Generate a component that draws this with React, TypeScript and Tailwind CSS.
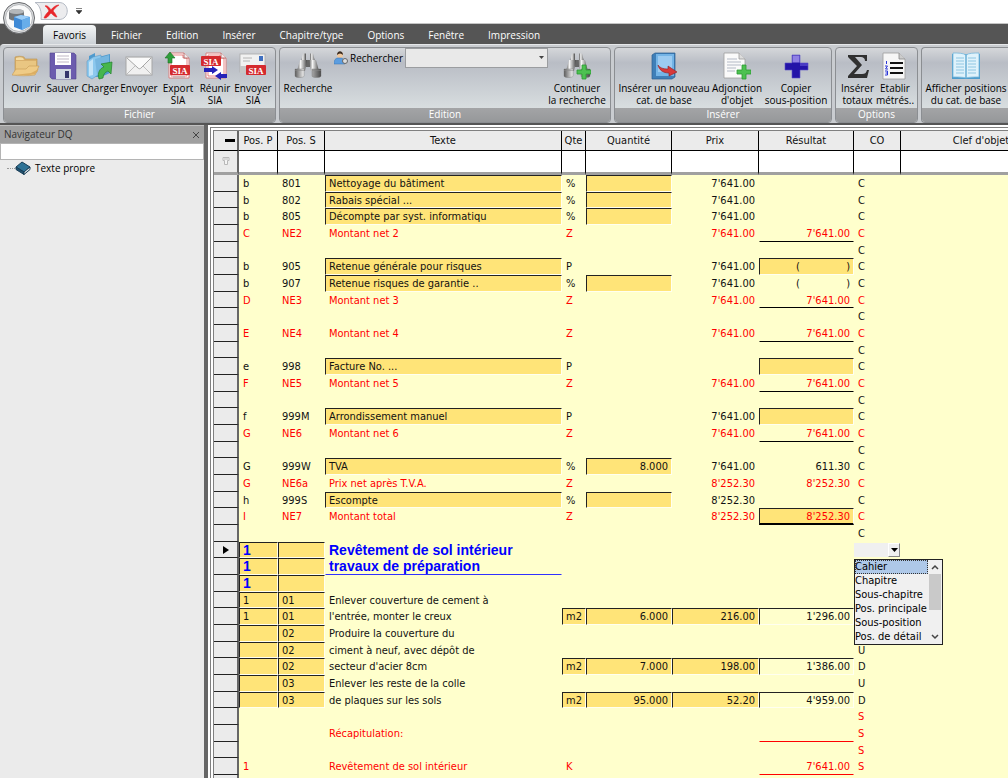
import { ReactNode } from "react";
import clsx from "clsx";

type Row = {
  p?: string;
  s?: string;
  text?: string;
  unit?: string;
  qty?: string;
  price?: string;
  result?: string;
  co?: string;
  red?: boolean;
  title?: boolean;
  titleEnd?: boolean;
  current?: boolean;
  // keys of the cells drawn as sunken edit fields
  boxes?: string;
  line?: "black" | "red" | "double";
};

const rows: Row[] = [
  { p: "b", s: "801", text: "Nettoyage du bâtiment", unit: "%", price: "7'641.00", co: "C", boxes: "text qty" },
  { p: "b", s: "802", text: "Rabais spécial ...", unit: "%", price: "7'641.00", co: "C", boxes: "text qty" },
  { p: "b", s: "805", text: "Décompte par syst. informatiqu", unit: "%", price: "7'641.00", co: "C", boxes: "text qty" },
  { p: "C", s: "NE2", text: "Montant net 2", unit: "Z", price: "7'641.00", result: "7'641.00", co: "C", red: true, line: "black" },
  { co: "C" },
  { p: "b", s: "905", text: "Retenue générale pour risques", unit: "P", price: "7'641.00", result: "()", co: "C", boxes: "text result" },
  { p: "b", s: "907", text: "Retenue risques de garantie ..", unit: "%", price: "7'641.00", result: "()", co: "C", boxes: "text qty" },
  { p: "D", s: "NE3", text: "Montant net 3", unit: "Z", price: "7'641.00", result: "7'641.00", co: "C", red: true, line: "black" },
  { co: "C" },
  { p: "E", s: "NE4", text: "Montant net 4", unit: "Z", price: "7'641.00", result: "7'641.00", co: "C", red: true, line: "black" },
  { co: "C" },
  { p: "e", s: "998", text: "Facture No. ...", unit: "P", co: "C", boxes: "text result" },
  { p: "F", s: "NE5", text: "Montant net 5", unit: "Z", price: "7'641.00", result: "7'641.00", co: "C", red: true, line: "black" },
  { co: "C" },
  { p: "f", s: "999M", text: "Arrondissement manuel", unit: "P", price: "7'641.00", co: "C", boxes: "text result" },
  { p: "G", s: "NE6", text: "Montant net 6", unit: "Z", price: "7'641.00", result: "7'641.00", co: "C", red: true, line: "black" },
  { co: "C" },
  { p: "G", s: "999W", text: "TVA", unit: "%", qty: "8.000", price: "7'641.00", result: "611.30", co: "C", boxes: "text qty" },
  { p: "G", s: "NE6a", text: "Prix net après T.V.A.", unit: "Z", price: "8'252.30", result: "8'252.30", co: "C", red: true },
  { p: "h", s: "999S", text: "Escompte", unit: "%", price: "8'252.30", co: "C", boxes: "text qty" },
  { p: "I", s: "NE7", text: "Montant total", unit: "Z", price: "8'252.30", result: "8'252.30", co: "C", red: true, boxes: "result", line: "double" },
  { co: "C" },
  { p: "1", text: "Revêtement de sol intérieur", title: true, current: true, boxes: "pos" },
  { p: "1", text: "travaux de préparation", title: true, titleEnd: true, boxes: "pos" },
  { p: "1", title: true, boxes: "pos" },
  { p: "1", s: "01", text: "Enlever couverture de cement à", boxes: "pos" },
  { p: "1", s: "01", text: "l'entrée, monter le creux", unit: "m2", qty: "6.000", price: "216.00", result: "1'296.00", boxes: "pos unit qty price sum" },
  { s: "02", text: "Produire la couverture du", boxes: "pos" },
  { s: "02", text: "ciment à neuf, avec dépôt de", co: "U", boxes: "pos" },
  { s: "02", text: "secteur d'acier 8cm", unit: "m2", qty: "7.000", price: "198.00", result: "1'386.00", co: "D", boxes: "pos unit qty price sum" },
  { s: "03", text: "Enlever les reste de la colle", co: "U", boxes: "pos" },
  { s: "03", text: "de plaques sur les sols", unit: "m2", qty: "95.000", price: "52.20", result: "4'959.00", co: "D", boxes: "pos unit qty price sum" },
  { co: "S", red: true },
  { text: "Récapitulation:", co: "S", red: true, line: "red" },
  { co: "S", red: true },
  { p: "1", text: "Revêtement de sol intérieur", unit: "K", result: "7'641.00", co: "S", red: true, line: "red" },
  {},
];

const menu = ["Fichier", "Edition", "Insérer", "Chapitre/type", "Options", "Fenêtre", "Impression"];
const levels = ["Cahier", "Chapitre", "Sous-chapitre", "Pos. principale", "Sous-position", "Pos. de détail"];

/* ---------- icons ---------- */

const Icon = ({ children }: { children: ReactNode }) => (
  <svg viewBox="0 0 28 28" className="w-7 h-7 shrink-0" aria-hidden="true">
    {children}
  </svg>
);

const SiaTag = ({ x, y }: { x: number; y: number }) => (
  <g transform={`translate(${x} ${y})`}>
    <rect width="20" height="10" rx="1" fill="#d42a2e" />
    <text x="10" y="8.6" textAnchor="middle" fontSize="9" fontWeight="bold" fill="#fff" fontFamily="Liberation Serif, serif">
      SIA
    </text>
  </g>
);

const FolderIcon = () => (
  <Icon>
    <path d="M3 5c3-1 6-1 9 0l1 2h12v13H3z" fill="#d9b06c" stroke="#bd954f" strokeWidth=".6" />
    <path d="M4 6c3-1 5-1 7 0l1 2H4z" fill="#f3dba4" />
    <path d="M4 9h20v8H4z" fill="#e9c682" />
    <path d="M0 23l4-6h10l3-3h10l-4 9c-7 1-16 1-23 0z" fill="#efcb86" stroke="#c69b55" strokeWidth=".6" />
    <path d="M2 23c8 0 15 .5 21-1l4-5-8 4z" fill="#dcae62" />
  </Icon>
);

const SaveIcon = () => (
  <Icon>
    <path d="M1 1h24l2 2v24H3l-2-2z" fill="#6b5cae" stroke="#51448f" strokeWidth=".6" />
    <rect x="6" y="1" width="16" height="12" fill="#fff" />
    <path d="M8 4h12M8 7h12M8 10h12" stroke="#c0b7c6" strokeWidth="1.200" />
    <rect x="7" y="17" width="15" height="10" fill="#d3d9e2" />
    <rect x="16" y="19" width="4" height="7" fill="#35356b" />
  </Icon>
);

const LoadIcon = () => (
  <Icon>
    <path d="M3 4l6-3v5l15-4v19l-9 4H3z" fill="#4f9ace" />
    <path d="M1 9l6-4 8-2v18l-9 6-5-3z" fill="#8cc8ee" stroke="#5591bd" strokeWidth=".5" />
    <path d="M9 7l14-4v16l-12 4z" fill="#76b6e0" />
    <path d="M3 10l4-3v16l-4 1z" fill="#c4e4f7" />
    <path d="M13 27c-2-6 1-11 5-12l-3-3 11-2-1 12-3-3c-3 1-5 4-5 7z" fill="#46b64c" stroke="#24812d" strokeWidth=".7" />
  </Icon>
);

const MailIcon = () => (
  <Icon>
    <rect x="1" y="5" width="26" height="18" fill="#f0f0f0" stroke="#a6a6a6" />
    <path d="M2 22l9-9M26 22l-9-9" stroke="#bdbdbd" />
    <path d="M2 6l11 10c1 1 2 1 3 0L26 6" fill="#fafafa" stroke="#a6a6a6" />
  </Icon>
);

const SheetShape = () => (
  <>
    <path d="M5 1h15l5 5v20H5z" fill="#fff" stroke="#d98080" />
    <path d="M7 3h12v3h4v18H7z" fill="none" stroke="#e05050" strokeWidth=".7" />
    <path d="M20 1v5h5" fill="#eee" stroke="#a55" strokeWidth=".8" />
  </>
);

const ExportSiaIcon = () => (
  <Icon>
    <SheetShape />
    <path d="M9 25h12" stroke="#aaa" />
    <path d="M6 0l5 6H8v5H4V6H1z" fill="#2f9e3b" stroke="#1b7426" strokeWidth=".6" />
    <SiaTag x={6} y={13} />
  </Icon>
);

const MergeSiaIcon = () => (
  <Icon>
    <SheetShape />
    <SiaTag x={0} y={4} />
    <path d="M3 16h8v-2l6 4-6 4v-2H3zM26 22h-6v-2l-6 4 6 4v-2h6z" fill="#2522b8" />
  </Icon>
);

const SendSiaIcon = () => (
  <Icon>
    <rect x="1" y="2" width="25" height="18" fill="#f1f1f1" stroke="#aaa" strokeWidth=".8" />
    <rect x="20" y="4" width="4" height="5" fill="#3f6fc0" />
    <path d="M4 6h9M4 9h7" stroke="#b4b4b4" />
    <path d="M1 14h11v7H1z" fill="#c6c6c6" />
    <SiaTag x={7} y={13} />
  </Icon>
);

const BinoShape = () => (
  <>
    <defs>
      <linearGradient id="tube">
        <stop offset="0" stopColor="#5c5c5c" />
        <stop offset=".35" stopColor="#f4f4f4" />
        <stop offset=".7" stopColor="#9c9c9c" />
        <stop offset="1" stopColor="#484848" />
      </linearGradient>
    </defs>
    <path d="M9 1.500h3v8H7z" fill="url(#tube)" />
    <path d="M16 1.500h3l2 8h-5z" fill="url(#tube)" />
    <rect x="12" y="8" width="4" height="7" fill="#666" />
    <path d="M6 8h7l-2 11H3z" fill="url(#tube)" />
    <path d="M15 8h7l3 11h-8z" fill="url(#tube)" />
    <path d="M1 17h9v7c0 2-9 2-9 0zM18 17h9v7c0 2-9 2-9 0z" fill="url(#tube)" stroke="#777" strokeWidth=".4" />
    <path d="M1 18.500h9M18 18.500h9" stroke="#888" strokeWidth=".5" />
  </>
);

const GreenPlus = () => (
  <path d="M19 13h4v5h5v4h-5v5h-4v-5h-5v-4h5z" fill="#4dc151" stroke="#2c9a32" strokeWidth=".8" />
);

const BinocularsIcon = () => (
  <Icon>
    <BinoShape />
  </Icon>
);

const BinocularsPlusIcon = () => (
  <Icon>
    <BinoShape />
    <GreenPlus />
  </Icon>
);

const CatalogIcon = () => (
  <Icon>
    <path d="M2 3l3-2h20v24l-3 2H2z" fill="#3f7fb8" stroke="#2d5f91" strokeWidth=".7" />
    <path d="M6 2h18v22H6z" fill="#74b4e6" />
    <path d="M8 4h14v16H8z" fill="#9ccbf1" />
    <path d="M8 13c2 3 5 4 10 4v-3l9 6-8 4v-3c-6 0-10-3-11-8z" fill="#d8393a" stroke="#8f1f22" strokeWidth=".6" />
  </Icon>
);

const AddObjectIcon = () => (
  <Icon>
    <path d="M1 1h15l6 6v19H1z" fill="#fafafa" stroke="#a0a0a0" strokeWidth=".8" />
    <path d="M16 1v6h6" fill="#ddd" stroke="#999" strokeWidth=".8" />
    <path d="M4 7h10M4 10h14M4 13h14M4 16h9M4 19h8" stroke="#b3bac6" strokeWidth="1.200" />
    <GreenPlus />
  </Icon>
);

const CopyIcon = () => (
  <Icon>
    <path d="M10 3h8v8h8v7h-8v8h-8v-8H3v-7h7z" fill="#2414a8" stroke="#5c52c8" strokeWidth=".6" />
    <path d="M10.500 3.500h7v7h-7z" fill="#8f80e4" />
    <path d="M18 11h8v3h-8z" fill="#4a3cc4" />
  </Icon>
);

const SumIcon = () => (
  <Icon>
    <path d="M4 3h19v6h-2c0-3-2-4-4-4h-6l7 8-8 9h8c3 0 4-1 5-4h2l-2 8H4v-2l9-10-9-9z" fill="#303030" />
  </Icon>
);

const MeasureIcon = () => (
  <Icon>
    <path d="M2 1h16l6 6v20H2z" fill="#f6f6f6" stroke="#a0a0a0" strokeWidth=".8" />
    <path d="M18 1v6h6" fill="#ccc" stroke="#888" strokeWidth=".8" />
    <path d="M9 11h13M9 16h13M9 21h13" stroke="#111" strokeWidth="2" />
    <path d="M5.500 9v3M4 14h2.500l-2 3h2.500M4 19h2.500v4H4M4.500 21h2" stroke="#2b36d8" fill="none" />
  </Icon>
);

const BookIcon = () => (
  <Icon>
    <path d="M0 2h28v25H0z" fill="#4f9dcc" />
    <path d="M1 1c5 0 10 0 13 2 3-2 8-2 13-2v24c-6 0-10 0-13 1-3-1-7-1-13-1z" fill="#dff2fb" stroke="#76b8dc" strokeWidth=".8" />
    <path d="M14 3v23" stroke="#6aaed4" strokeWidth="1.500" />
    <path d="M4 6h8M4 9h8M4 12h8M4 15h8M4 18h8M4 21h8M16 6h8M16 9h8M16 12h8M16 15h8M16 18h8M16 21h8" stroke="#8fc6e2" />
  </Icon>
);

/* ---------- ribbon ---------- */

const Tool = ({ icon, lines, className }: { icon: ReactNode; lines: string[]; className: string }) => (
  <button type="button" className={clsx("flex flex-col items-center shrink-0 pt-1", className)}>
    {icon}
    <span className="mt-[2px] text-[10px] leading-3 text-black whitespace-nowrap">
      {lines.map((l) => (
        <span key={l} className="block">{l}</span>
      ))}
    </span>
  </button>
);

const Group = ({ title, className, children }: { title: string; className?: string; children: ReactNode }) => (
  <section className={clsx("flex flex-col shrink-0 h-[76px] rounded-sm border border-[#8b8e92] overflow-hidden bg-linear-to-b from-[#d5d7da] from-0% via-[#b9bdc5] via-20% to-[#e2e8e8]", className)}>
    <div className="flex flex-1 px-1">{children}</div>
    <h2 className="h-[14px] bg-linear-to-b from-[#a3a4a6] to-[#96989a] text-[10px] leading-[13px] text-white text-center">{title}</h2>
  </section>
);

const Ribbon = () => (
  <div className="flex gap-[3px] h-[79px] pt-[2px] pl-[3px] bg-[#c9ccd0] rounded-tl border-t border-[#e5e7e9] overflow-hidden">
    <Group title="Fichier" className="w-[273px]">
      <Tool icon={<FolderIcon />} lines={["Ouvrir"]} className="w-9" />
      <Tool icon={<SaveIcon />} lines={["Sauver"]} className="w-[37px]" />
      <Tool icon={<LoadIcon />} lines={["Charger"]} className="w-[38px]" />
      <Tool icon={<MailIcon />} lines={["Envoyer"]} className="w-10" />
      <Tool icon={<ExportSiaIcon />} lines={["Export", "SIA"]} className="w-[38px]" />
      <Tool icon={<MergeSiaIcon />} lines={["Réunir", "SIA"]} className="w-9" />
      <Tool icon={<SendSiaIcon />} lines={["Envoyer", "SIA"]} className="w-10" />
    </Group>

    <Group title="Edition" className="w-[332px]">
      <Tool icon={<BinocularsIcon />} lines={["Recherche"]} className="w-12" />
      <div className="flex flex-1 items-start gap-[2px] pl-[2px]">
        <label htmlFor="search" className="flex items-center gap-[2px] h-[20px] text-[10px] text-black">
          <svg viewBox="0 0 14 14" className="w-[14px] h-[14px]" aria-hidden="true">
            <circle cx="6" cy="4" r="3" fill="#f0c9a0" />
            <path d="M3 4c0-5 6-5 6 0-2-2-4-2-6 0z" fill="#3b2c20" />
            <path d="M0 13c0-6 3-6 6-6s4 1 5 6z" fill="#5b9de0" stroke="#3572b0" strokeWidth=".5" />
            <circle cx="11" cy="10" r="2.500" fill="#ddd" stroke="#666" />
          </svg>
          Rechercher
        </label>
        <div className="relative flex-1">
          <select id="search" className="block w-full h-[20px] appearance-none bg-[#e9e9e9] border border-[#9b9da0]">
            <option></option>
          </select>
          <svg viewBox="0 0 5 3" className="absolute right-1 top-[8px] w-[5px] h-[3px] pointer-events-none" aria-hidden="true">
            <path d="M0 0h5L2.500 3z" fill="#444" />
          </svg>
        </div>
      </div>
      <Tool icon={<BinocularsPlusIcon />} lines={["Continuer", "la recherche"]} className="w-[58px]" />
    </Group>

    <Group title="Insérer" className="w-[218px]">
      <Tool icon={<CatalogIcon />} lines={["Insérer un nouveau", "cat. de base"]} className="w-[90px]" />
      <Tool icon={<AddObjectIcon />} lines={["Adjonction", "d'objet"]} className="w-[56px]" />
      <Tool icon={<CopyIcon />} lines={["Copier", "sous-position"]} className="w-[62px]" />
    </Group>

    <Group title="Options" className="w-[83px]">
      <Tool icon={<SumIcon />} lines={["Insérer", "totaux"]} className="w-[35px]" />
      <Tool icon={<MeasureIcon />} lines={["Etablir", "métrés.."]} className="w-10" />
    </Group>

    <section className="flex flex-col flex-1 h-[76px] rounded-l-sm border border-r-0 border-[#8b8e92] overflow-hidden bg-linear-to-b from-[#d5d7da] from-0% via-[#b9bdc5] via-20% to-[#e2e8e8]">
      <div className="flex flex-1 pl-1">
        <Tool icon={<BookIcon />} lines={["Afficher positions", "du cat. de base"]} className="w-20" />
      </div>
      <div className="h-[14px] bg-linear-to-b from-[#a3a4a6] to-[#96989a]" />
    </section>
  </div>
);

const Header = () => (
  <header className="relative bg-[#555] pb-[2px] font-['Open_Sans','Noto_Sans',sans-serif]">
    <div className="flex items-start h-6 pl-[34px] bg-white border-b border-[#c4c4c4]">
      <button type="button" aria-label="Fermer">
        <svg viewBox="0 0 34 20" className="w-[34px] h-5" aria-hidden="true">
          <path d="M1 2.500h24c11 0 11 17 0 17H7C8 12 6 5 1 2.500z" fill="#ececee" stroke="#b4bac4" />
          <path d="M11 6c2-1 4 1 6 4 2-3 5-5 8-5-3 2-5 4-6 6 2 2 3 4 4 6-2 0-4-2-6-4-2 2-3 4-5 5h-2c1-3 3-5 5-7-1-2-2-4-4-5z" fill="#e8262b" stroke="#e8262b" strokeWidth=".6" />
        </svg>
      </button>
      <button type="button" aria-label="Personnaliser" className="mt-2 ml-2">
        <svg viewBox="0 0 6 6" className="w-[6px] h-[6px]" aria-hidden="true">
          <path d="M0 .5h6M0 2.500h6L3 6z" stroke="#333" strokeWidth=".6" fill="#333" />
        </svg>
      </button>
    </div>

    <button type="button" aria-label="Menu application" className="absolute left-[3px] top-[2px] w-8 h-8 rounded-full">
      <svg viewBox="0 0 32 32" className="w-8 h-8" aria-hidden="true">
        <circle cx="16" cy="16" r="15.500" fill="#d9dadc" stroke="#66686b" />
        <circle cx="16" cy="16" r="13.500" fill="#fafafa" stroke="#b5b8bb" />
        <path d="M6 9.500c0-3 14-3 15 0v7c-1 3-14 3-15 0z" fill="#73777b" />
        <ellipse cx="13.500" cy="9.500" rx="7.500" ry="2.500" fill="#b4b7ba" />
        <path d="M11 15l7-2 9 2v9l-8 4-8-3z" fill="#3f8ad6" />
        <path d="M11 15l7-2 9 2-8 3z" fill="#9ccdf7" />
        <path d="M19 18l8-3v9l-8 4z" fill="#67adea" />
      </svg>
    </button>

    <nav className="flex h-5 pl-[43px] text-[10px] leading-5 text-white">
      <a href="#favoris" className="mr-[3px] px-[10px] mt-px rounded-t-sm bg-linear-to-b from-[#f4f6f6] to-[#ccd1d6] text-black">Favoris</a>
      {menu.map((m) => (
        <a key={m} href={"#" + m.toLowerCase()} className="px-3 mt-px">{m}</a>
      ))}
    </nav>

    <Ribbon />
  </header>
);

/* ---------- navigator ---------- */

const Navigator = () => (
  <aside className="w-[204px] shrink-0 bg-[#ebebeb] border-t border-[#c0c0c0] font-['Open_Sans','Noto_Sans',sans-serif]">
    <div className="flex items-center justify-between h-[17px] pl-1 pr-1 bg-[#a0a0a0]">
      <h2 className="text-[10px] text-[#333]">Navigateur DQ</h2>
      <button type="button" aria-label="Fermer le navigateur">
        <svg viewBox="0 0 8 8" className="w-2 h-2" aria-hidden="true">
          <path d="M1 1l6 6M7 1L1 7" stroke="#444" />
        </svg>
      </button>
    </div>
    <input aria-label="Filtre" className="block w-full h-[17px] px-1 bg-white border border-[#b4b4b4] text-[10px]" />
    <ul>
      <li className="flex items-center h-4 pl-[7px] text-[10px] text-black">
        <span className="w-2 border-t border-dotted border-[#999]" />
        <svg viewBox="0 0 16 14" className="w-4 h-[14px] mr-1" aria-hidden="true">
          <path d="M1 6l6-5 8 5-6 5z" fill="#2f7396" stroke="#173c55" />
          <path d="M1 6v2.500l8 5V11z" fill="#1f506f" stroke="#173c55" />
          <path d="M9 11l6-5v2.500l-6 5z" fill="#dfe6ea" stroke="#173c55" />
        </svg>
        Texte propre
      </li>
    </ul>
  </aside>
);

/* ---------- grid ---------- */

const LevelSelect = () => (
  <div className="relative w-[46px] h-[14px]">
    <select aria-label="Niveau" className="block w-full h-full appearance-none bg-[#f0f0f0]">
      <option></option>
    </select>
    <span className="absolute right-0 top-0 flex items-center justify-center w-3 h-[14px] bg-[#f0f0f0] border border-l-white border-t-white border-r-[#888] border-b-[#888] pointer-events-none">
      <svg viewBox="0 0 7 4" className="w-[7px] h-1" aria-hidden="true">
        <path d="M0 0h7L3.500 4z" fill="#000" />
      </svg>
    </span>
    <div className="absolute left-0 top-4 z-10 flex w-[89px] bg-[#f0f0f0] border border-[#222]">
      <ul role="listbox" aria-label="Niveau" className="flex-1">
        {levels.map((l, i) => (
          <li
            key={l}
            role="option"
            aria-selected={i === 0}
            className={clsx("h-[14px] leading-[14px] text-black whitespace-nowrap", i === 0 && "bg-[#aec8e8] outline-1 -outline-offset-1 outline-dotted outline-[#333]")}
          >
            {l}
          </li>
        ))}
      </ul>
      <div className="flex flex-col items-center w-[14px]">
        <svg viewBox="0 0 14 14" className="w-[14px] h-[14px]" aria-hidden="true">
          <path d="M4 9l3-3 3 3" stroke="#444" strokeWidth="1.500" fill="none" />
        </svg>
        <div className="w-3 h-9 bg-[#c9c9c9]" />
        <svg viewBox="0 0 14 14" className="w-[14px] h-[14px] mt-auto" aria-hidden="true">
          <path d="M4 5l3 3 3-3" stroke="#444" strokeWidth="1.500" fill="none" />
        </svg>
      </div>
    </div>
  </div>
);

const plain = "border border-transparent";
const sunken = "border border-t-[#222] border-l-[#222] border-b-[#fffff0] border-r-[#fffff0]";
const titleFont = "font-['Liberation_Sans',sans-serif] font-bold text-[14px] text-[#0000ff]";

const GridRow = ({ row, index }: { row: Row; index: number }) => {
  const cell = (key: string) =>
    (row.boxes ?? "").split(" ").includes(key) ? clsx(sunken, "bg-[#ffe478]") : plain;

  const isSum = (row.boxes ?? "").includes("sum");
  const resultBorder =
    row.line === "black"
      ? "border border-transparent border-b-black"
      : row.line === "red"
        ? "border border-transparent border-b-[#ff0000]"
        : row.line === "double"
          ? "border border-t-[#222] border-l-[#222] border-r-[#fffff0] border-b-2 border-b-black bg-[#ffe478]"
          : isSum
            ? sunken
            : cell("result");

  return (
    <tr className={clsx(index % 3 === 1 ? "h-4" : "h-[17px]", row.red ? "text-[#ff0000]" : "text-[#111]")}>
      <th scope="row" className="bg-[#ebebeb] border-b border-b-[#222] border-r-2 border-r-[#666]">
        {row.current && (
          <svg viewBox="0 0 6 8" className="w-[6px] h-2 mx-auto" aria-label="Ligne active">
            <path d="M0 0l6 4-6 4z" fill="#000" />
          </svg>
        )}
      </th>
      <td className={clsx(cell("pos"), "pl-[3px]", row.title && titleFont)}>{row.p}</td>
      <td className={clsx(cell("pos"), "pl-[3px]")}>{row.s}</td>
      <td className={clsx(row.titleEnd ? "border border-transparent border-b-[#3030ff]" : cell("text"), "pl-[3px]", row.title && titleFont)}>
        {row.text}
      </td>
      <td className={clsx(cell("unit"), "pl-[3px]")}>{row.unit}</td>
      <td className={clsx(cell("qty"), "pr-[3px] text-right")}>{row.qty}</td>
      <td className={clsx(cell("price"), "pr-[3px] text-right")}>{row.price}</td>
      <td className={clsx(resultBorder, "pr-[3px] text-right")}>
        {row.result === "()" ? (
          <span className="flex justify-between pl-9">
            <span>(</span>
            <span>)</span>
          </span>
        ) : (
          row.result
        )}
      </td>
      <td className={row.current ? "" : clsx(plain, "pl-[3px]")}>{row.current ? <LevelSelect /> : row.co}</td>
      <td />
    </tr>
  );
};

const heads = ["Pos. P", "Pos. S", "Texte", "Qte", "Quantité", "Prix", "Résultat", "CO", "Clef d'objet"];

const Grid = () => (
  <main className="flex-1 min-w-0 overflow-hidden bg-white border-l-4 border-[#666]">
    <div className="h-full pl-[2px] pt-[2px]">
      <div className="h-full border-l-4 border-t-4 border-double border-[#808080]">
        <table className="w-full min-w-[848px] table-fixed border-separate border-spacing-0 bg-[#ffffcc] font-['DejaVu_Sans_Condensed','DejaVu_Sans',sans-serif] text-[11px] leading-[13px] whitespace-nowrap">
          <colgroup>
            <col className="w-[25px]" />
            <col className="w-[39px]" />
            <col className="w-[47px]" />
            <col className="w-[237px]" />
            <col className="w-6" />
            <col className="w-[86px]" />
            <col className="w-[87px]" />
            <col className="w-[95px]" />
            <col className="w-[47px]" />
            <col />
          </colgroup>
          <thead>
            <tr className="h-5 bg-[#ebebeb] text-[#111]">
              <th aria-label="Ligne" className="border-b border-b-black border-r-2 border-r-[#666]">
                <div className="w-[10px] h-[3px] ml-auto mr-[2px] bg-black" />
              </th>
              {heads.map((h) => (
                <th key={h} scope="col" className="border-b border-r border-black font-normal text-center">{h}</th>
              ))}
            </tr>
            <tr className="h-6 bg-white">
              <th className="bg-[#ebebeb] border-b-[3px] border-b-[#a0a0a0] border-r-2 border-r-[#666]">
                <svg viewBox="0 0 8 9" className="w-2 h-[9px] mx-auto" aria-label="Filtrer">
                  <path d="M1 .5h6v3H5.500v4h-3v-4H1zM2 2h4" fill="#f4f4f4" stroke="#b8b8b8" />
                </svg>
              </th>
              {heads.map((h) => (
                <td key={h} className="border-b-[3px] border-b-[#a0a0a0] border-r border-r-black" />
              ))}
            </tr>
          </thead>
          <tbody>
            {rows.map((row, i) => (
              <GridRow key={i} row={row} index={i} />
            ))}
          </tbody>
        </table>
      </div>
    </div>
  </main>
);

const App = () => (
  <div className="flex flex-col h-screen overflow-hidden bg-[#ebebeb]">
    <Header />
    <div className="flex flex-1 min-h-0">
      <Navigator />
      <Grid />
    </div>
  </div>
);

export default App;
